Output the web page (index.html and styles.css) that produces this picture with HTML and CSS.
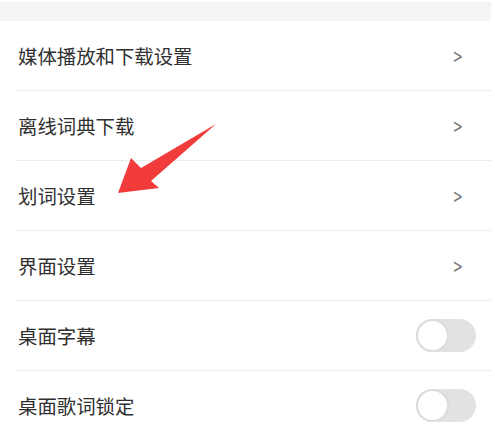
FILE: index.html
```html
<!DOCTYPE html>
<html lang="zh">
<head>
<meta charset="utf-8">
<link rel="stylesheet" href="styles.css">
</head>
<body>
<div class="page">
  <div class="band"></div>
  <ul class="list">
    <li class="row"><span class="label">媒体播放和下载设置</span><span class="chev">&gt;</span></li>
    <li class="row"><span class="label">离线词典下载</span><span class="chev">&gt;</span></li>
    <li class="row"><span class="label">划词设置</span><span class="chev">&gt;</span></li>
    <li class="row"><span class="label">界面设置</span><span class="chev">&gt;</span></li>
    <li class="row"><span class="label">桌面字幕</span><span class="toggle"><span class="knob"></span></span></li>
    <li class="row"><span class="label">桌面歌词锁定</span><span class="toggle"><span class="knob"></span></span></li>
  </ul>
  <svg class="arrow" width="495" height="424" viewBox="0 0 495 424">
    <polygon points="118,193 131,158 141,168 216,124 151,181 159,188" fill="#f23b3b"/>
  </svg>
</div>
</body>
</html>
```

FILE: styles.css
```css
html, body {
  margin: 0;
  padding: 0;
  background: #ffffff;
}
.page {
  position: relative;
  width: 495px;
  height: 424px;
  overflow: hidden;
  font-family: "Noto Sans CJK SC", "Noto Sans", sans-serif;
}
.band {
  margin-top: 2px;
  width: 491px;
  height: 19px;
  background: #f4f4f4;
}
.list {
  list-style: none;
  margin: 0;
  padding: 0;
  width: 491px;
}
.row {
  display: flex;
  align-items: center;
  justify-content: space-between;
  height: 69px;
  margin-left: 16px;
  padding-left: 2px;
  padding-right: 15px;
  border-bottom: 1px solid #ececec;
  color: #303030;
  font-size: 19.4px;
}
.label {
  line-height: 1;
}
.chev {
  font-family: "DejaVu Sans", sans-serif;
  font-size: 16px;
  line-height: 1;
  color: #777777;
  margin-right: 12px;
  margin-top: 3px;
  transform: scale(0.75, 1.2);
}
.toggle {
  position: relative;
  width: 60px;
  height: 33px;
  border-radius: 17px;
  background: #e2e2e2;
}
.knob {
  position: absolute;
  left: 0;
  top: 0;
  width: 29px;
  height: 29px;
  border-radius: 50%;
  background: #ffffff;
  border: 2px solid #dcdcdc;
}
.arrow {
  position: absolute;
  left: 0;
  top: 0;
}
```
